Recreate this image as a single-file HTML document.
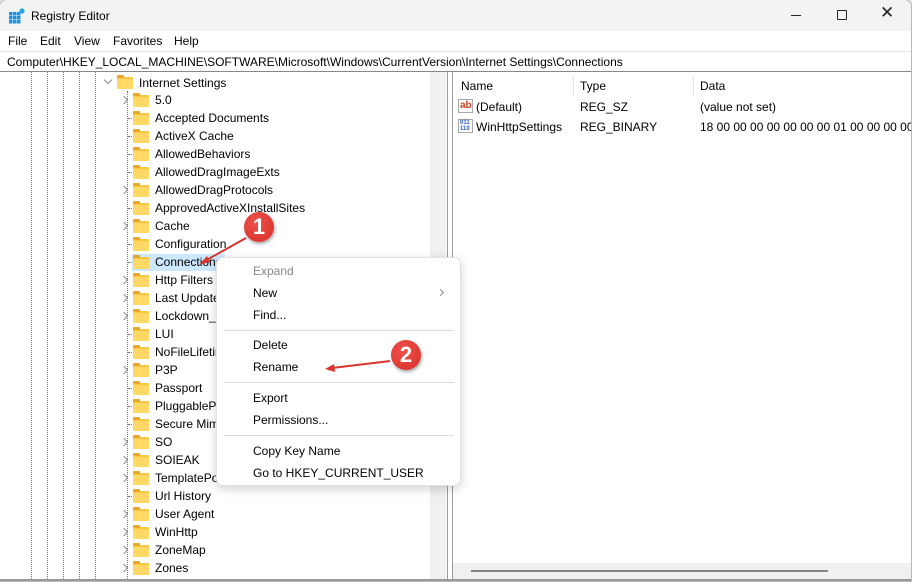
<!DOCTYPE html>
<html><head><meta charset="utf-8"><style>
*{margin:0;padding:0;box-sizing:border-box}
body{width:912px;height:582px;background:#e6e6e6;font-family:"Liberation Sans",sans-serif;font-size:12px;color:#000;position:relative;overflow:hidden}
.win{position:absolute;left:-1px;top:-1px;width:913px;height:583px;background:#fff;border:1px solid #b8b8b8;border-radius:8px 8px 0 0;overflow:hidden}
.abs{position:absolute}
.title{left:0;top:0;width:912px;height:31px;background:#f3f3f3}
.t{position:absolute;white-space:nowrap;line-height:14px}
.dot{position:absolute;width:0;border-left:1px dotted #777}
.hd{position:absolute;width:8px;border-top:1px dotted #777}
.fold{position:absolute;width:16px;height:12px;background:#fcc63f;border-radius:1px}
.fold:before{content:"";position:absolute;left:0;top:-2px;width:7px;height:3px;background:#e8a92a;border-radius:1px 1px 0 0}
.fold:after{content:"";position:absolute;left:0;top:2px;width:16px;height:10px;background:#ffd865;border-radius:1px}
.chev{position:absolute;width:6px;height:6px;border-right:1.3px solid #888;border-bottom:1.3px solid #888;transform:rotate(-45deg)}
.menu{left:216px;top:257px;width:245px;height:229px;background:#fff;border:1px solid #e2e2e2;border-radius:7px;box-shadow:0 3px 10px rgba(0,0,0,.18)}
.sep{position:absolute;left:7px;width:230px;height:1px;background:#dcdcdc}
.badge{position:absolute;width:30px;height:30px;border-radius:50%;background:radial-gradient(circle at 40% 35%,#f0504a,#d52f2a);color:#fff;font-weight:bold;font-size:22px;text-align:center;line-height:30px;box-shadow:1px 2px 3px rgba(0,0,0,.35)}
</style></head><body><div class="win">
<div class="abs title"></div>
<svg class="abs" style="left:9px;top:8px" width="16" height="16" viewBox="0 0 16 16"><g fill="#1e90e0"><rect x="0" y="4" width="3.5" height="3.5"/><rect x="4" y="4" width="3.5" height="3.5"/><rect x="8" y="4" width="3.5" height="3.5"/><rect x="0" y="8" width="3.5" height="3.5"/><rect x="4" y="8" width="3.5" height="3.5"/><rect x="8" y="8" width="3.5" height="3.5"/><rect x="0" y="12" width="3.5" height="3.5"/><rect x="4" y="12" width="3.5" height="3.5"/><rect x="8" y="12" width="3.5" height="3.5"/></g><circle cx="13" cy="3" r="2.6" fill="#2aa0e8"/></svg>
<div class="t" style="left:31px;top:9px">Registry Editor</div>
<div class="abs" style="left:791px;top:15px;width:10px;height:1px;background:#222"></div>
<div class="abs" style="left:837px;top:10px;width:10px;height:10px;border:1px solid #222;border-radius:1px"></div>
<div class="t" style="left:880px;top:6px;font-size:17px;color:#222">✕</div>
<div class="t" style="left:8px;top:34px">File</div><div class="t" style="left:40px;top:34px">Edit</div><div class="t" style="left:74px;top:34px">View</div><div class="t" style="left:113px;top:34px">Favorites</div><div class="t" style="left:174px;top:34px">Help</div>
<div class="abs" style="left:0;top:51px;width:912px;height:20px;border-top:1px solid #e3e3e3"></div>
<div class="t" style="left:7px;top:55px">Computer\HKEY_LOCAL_MACHINE\SOFTWARE\Microsoft\Windows\CurrentVersion\Internet Settings\Connections</div>
<div class="abs" style="left:0;top:71px;width:912px;height:1px;background:#888"></div>
<div class="abs" style="left:430px;top:72px;width:16px;height:508px;background:#f0f0f0"></div>
<div class="abs" style="left:447px;top:72px;width:1px;height:508px;background:#999"></div>
<div class="abs" style="left:452px;top:72px;width:1px;height:508px;background:#999"></div>
<div class="abs" style="left:0;top:579px;width:912px;height:2px;background:#999"></div>
<div class="abs" style="left:453px;top:563px;width:458px;height:16px;background:#f0f0f0"></div>
<div class="abs" style="left:471px;top:570px;width:357px;height:2px;background:#858585"></div>
<div class="abs" style="left:573px;top:76px;width:1px;height:20px;background:#e5e5e5"></div>
<div class="abs" style="left:693px;top:76px;width:1px;height:20px;background:#e5e5e5"></div>
<div class="t" style="left:461px;top:79px">Name</div><div class="t" style="left:580px;top:79px">Type</div><div class="t" style="left:700px;top:79px">Data</div>
<div class="abs" style="left:458px;top:99px;width:15px;height:14px;border:1px solid #aaa;background:#fff;color:#d3401e;font-weight:bold;font-size:10px;line-height:11px;padding-left:1px">ab</div>
<div class="abs" style="left:458px;top:119px;width:15px;height:14px;border:1px solid #aaa;background:#fff;color:#2a5fc0;font-weight:bold;font-size:6px;line-height:6px;padding-left:1px">011<br>110</div>
<div class="t" style="left:476px;top:100px">(Default)</div><div class="t" style="left:580px;top:100px">REG_SZ</div><div class="t" style="left:700px;top:100px">(value not set)</div>
<div class="t" style="left:476px;top:120px">WinHttpSettings</div><div class="t" style="left:580px;top:120px">REG_BINARY</div><div class="t" style="left:700px;top:120px">18 00 00 00 00 00 00 00 01 00 00 00 00 00</div>
<div class="dot" style="left:31px;top:72px;height:507px"></div><div class="dot" style="left:47px;top:72px;height:507px"></div><div class="dot" style="left:63px;top:72px;height:507px"></div><div class="dot" style="left:79px;top:72px;height:507px"></div><div class="dot" style="left:95px;top:72px;height:507px"></div>
<div class="dot" style="left:127px;top:91px;height:488px"></div>
<div class="abs" style="left:132px;top:254px;width:93px;height:17px;background:#cce8ff"></div>
<div class="chev" style="left:105px;top:77px;transform:rotate(45deg)"></div>
<div class="fold" style="left:117px;top:77px"></div>
<div class="t" style="left:139px;top:76px">Internet Settings</div>
<div id="tree"></div>
<script>
var items=[["5.0",1],["Accepted Documents",0],["ActiveX Cache",0],["AllowedBehaviors",0],["AllowedDragImageExts",0],["AllowedDragProtocols",1],["ApprovedActiveXInstallSites",0],["Cache",1],["Configuration",0],["Connections",0],["Http Filters",1],["Last Update",1],["Lockdown_Zones",1],["LUI",0],["NoFileLifetime",0],["P3P",1],["Passport",0],["PluggableProtocols",0],["Secure Mime",0],["SO",1],["SOIEAK",1],["TemplatePolicies",1],["Url History",0],["User Agent",1],["WinHttp",1],["ZoneMap",1],["Zones",1]];
var h="";items.forEach(function(it,i){var y=100+i*18;
if(it[1])h+='<div class="chev" style="left:121px;top:'+(y-3)+'px"></div>';else h+='<div class="hd" style="left:128px;top:'+y+'px"></div>';
h+='<div class="fold" style="left:133px;top:'+(y-5)+'px"></div><div class="t" style="left:155px;top:'+(y-7)+'px">'+it[0]+'</div>';});
document.getElementById("tree").innerHTML=h;
</script>
<div class="abs menu">
<div class="t" style="left:36px;top:6px;color:#888">Expand</div>
<div class="t" style="left:36px;top:28px">New</div><div class="chev" style="left:221px;top:32px;width:5px;height:5px"></div>
<div class="t" style="left:36px;top:50px">Find...</div>
<div class="sep" style="top:72px"></div>
<div class="t" style="left:36px;top:80px">Delete</div>
<div class="t" style="left:36px;top:102px">Rename</div>
<div class="sep" style="top:124px"></div>
<div class="t" style="left:36px;top:133px">Export</div>
<div class="t" style="left:36px;top:155px">Permissions...</div>
<div class="sep" style="top:177px"></div>
<div class="t" style="left:36px;top:186px">Copy Key Name</div>
<div class="t" style="left:36px;top:208px">Go to HKEY_CURRENT_USER</div>
</div>
<svg class="abs" style="left:0;top:0" width="912" height="582"><g stroke="#d9342e" stroke-width="2" fill="#d9342e"><line x1="246" y1="238" x2="203" y2="262"/><polygon points="199,265 207,256 210,262" stroke="none"/><line x1="390" y1="361" x2="332" y2="368"/><polygon points="325,369 334,364 335,372" stroke="none"/></g></svg>
<div class="badge" style="left:244px;top:212px">1</div>
<div class="badge" style="left:391px;top:340px">2</div>
</div></body></html>
